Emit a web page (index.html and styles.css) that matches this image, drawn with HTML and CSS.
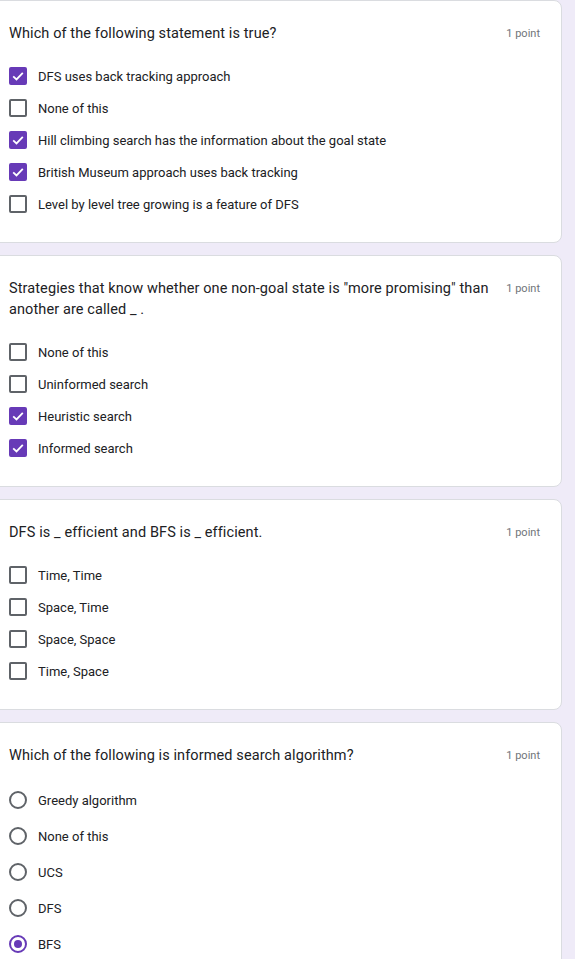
FILE: index.html
```html
<!DOCTYPE html>
<html>
<head>
<meta charset="utf-8">
<link rel="stylesheet" href="styles.css">
</head>
<body>
<div class="page">
  <div class="card">
    <div class="qhead"><div class="qtitle">Which of the following statement is true?</div><div class="pts">1 point</div></div>
    <div class="opts">
      <div class="opt"><span class="cb on"><svg viewBox="0 0 18 18"><path d="M4.2 9.3 L7.5 12.4 L13.8 5.8" fill="none" stroke="#fff" stroke-width="1.8"/></svg></span><span>DFS uses back tracking approach</span></div>
      <div class="opt"><span class="cb"></span><span>None of this</span></div>
      <div class="opt"><span class="cb on"><svg viewBox="0 0 18 18"><path d="M4.2 9.3 L7.5 12.4 L13.8 5.8" fill="none" stroke="#fff" stroke-width="1.8"/></svg></span><span>Hill climbing search has the information about the goal state</span></div>
      <div class="opt"><span class="cb on"><svg viewBox="0 0 18 18"><path d="M4.2 9.3 L7.5 12.4 L13.8 5.8" fill="none" stroke="#fff" stroke-width="1.8"/></svg></span><span>British Museum approach uses back tracking</span></div>
      <div class="opt"><span class="cb"></span><span>Level by level tree growing is a feature of DFS</span></div>
    </div>
  </div>
  <div class="card">
    <div class="qhead"><div class="qtitle">Strategies that know whether one non-goal state is "more promising" than another are called _ .</div><div class="pts">1 point</div></div>
    <div class="opts">
      <div class="opt"><span class="cb"></span><span>None of this</span></div>
      <div class="opt"><span class="cb"></span><span>Uninformed search</span></div>
      <div class="opt"><span class="cb on"><svg viewBox="0 0 18 18"><path d="M4.2 9.3 L7.5 12.4 L13.8 5.8" fill="none" stroke="#fff" stroke-width="1.8"/></svg></span><span>Heuristic search</span></div>
      <div class="opt"><span class="cb on"><svg viewBox="0 0 18 18"><path d="M4.2 9.3 L7.5 12.4 L13.8 5.8" fill="none" stroke="#fff" stroke-width="1.8"/></svg></span><span>Informed search</span></div>
    </div>
  </div>
  <div class="card">
    <div class="qhead"><div class="qtitle">DFS is _ efficient and BFS is _ efficient.</div><div class="pts">1 point</div></div>
    <div class="opts">
      <div class="opt"><span class="cb"></span><span>Time, Time</span></div>
      <div class="opt"><span class="cb"></span><span>Space, Time</span></div>
      <div class="opt"><span class="cb"></span><span>Space, Space</span></div>
      <div class="opt"><span class="cb"></span><span>Time, Space</span></div>
    </div>
  </div>
  <div class="card">
    <div class="qhead"><div class="qtitle">Which of the following is informed search algorithm?</div><div class="pts">1 point</div></div>
    <div class="opts">
      <div class="opt radio"><span class="rb"></span><span>Greedy algorithm</span></div>
      <div class="opt radio"><span class="rb"></span><span>None of this</span></div>
      <div class="opt radio"><span class="rb"></span><span>UCS</span></div>
      <div class="opt radio"><span class="rb"></span><span>DFS</span></div>
      <div class="opt radio"><span class="rb on"></span><span>BFS</span></div>
    </div>
  </div>
</div>
</body>
</html>
```

FILE: styles.css
```css
html, body {
  margin: 0;
  padding: 0;
  background: #efebf8;
  overflow: hidden;
}
body {
  font-family: Roboto, "Liberation Sans", sans-serif;
  color: #202124;
}
.page {
  display: flex;
  flex-direction: column;
  gap: 12px;
  margin-left: -17px;
  width: 579px;
}
.card {
  background: #fff;
  border: 1px solid #dadce0;
  border-radius: 8px;
  padding: 22px 21px 22px 25px;
}
.qhead {
  display: flex;
  align-items: flex-start;
  gap: 12px;
}
.qtitle {
  flex: 1;
  font-size: 14.5px;
  line-height: 21px;
  letter-spacing: 0.1px;
}
.pts {
  font-size: 11px;
  line-height: 20px;
  color: #70757a;
  white-space: nowrap;
  padding-top: 1px;
}
.opts {
  margin-top: 16px;
  display: flex;
  flex-direction: column;
}
.opt {
  display: flex;
  align-items: center;
  height: 32px;
  font-size: 13px;
  gap: 11px;
}
.opt.radio {
  height: 36px;
}
.cb {
  box-sizing: border-box;
  width: 18px;
  height: 18px;
  border: 2px solid #5f6368;
  border-radius: 2px;
  flex: none;
  display: flex;
}
.cb.on {
  background: #673ab7;
  border-color: #673ab7;
}
.cb svg {
  width: 18px;
  height: 18px;
  margin: -2px;
}
.rb {
  box-sizing: border-box;
  width: 18px;
  height: 18px;
  border: 2px solid #5f6368;
  border-radius: 50%;
  flex: none;
  display: flex;
  align-items: center;
  justify-content: center;
}
.rb.on {
  border-color: #673ab7;
}
.rb.on::after {
  content: "";
  width: 8px;
  height: 8px;
  border-radius: 50%;
  background: #673ab7;
}
```
